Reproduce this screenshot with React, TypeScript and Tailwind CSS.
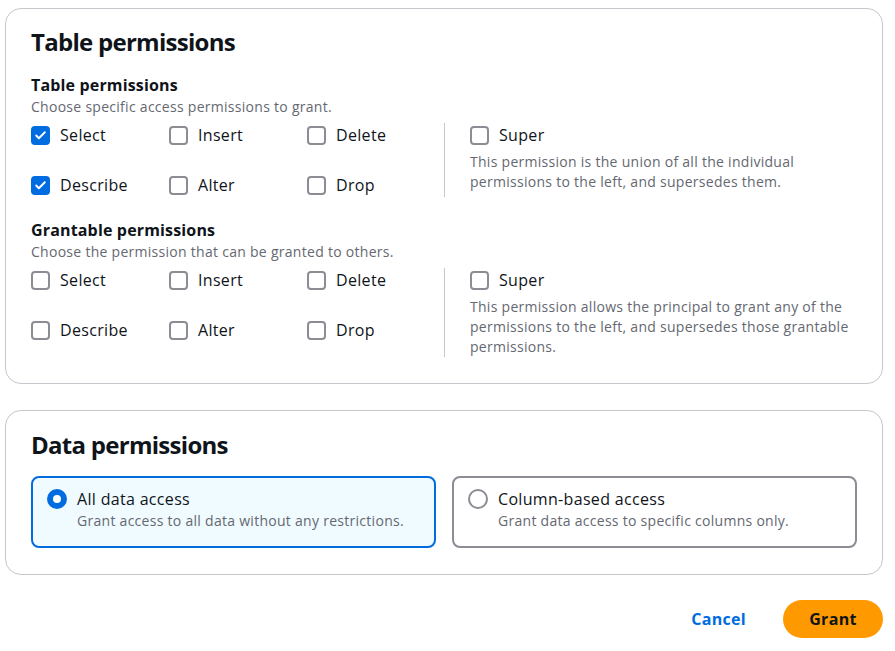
import { Check } from "lucide-react";

type Perm = { label: string; checked?: boolean };

function Checkbox({ checked }: { checked?: boolean }) {
  return checked ? (
    <span className="flex h-[19px] w-[19px] shrink-0 items-center justify-center rounded-[4px] bg-[#006ce0]">
      <Check className="h-[13px] w-[13px] text-white" strokeWidth={3.5} />
    </span>
  ) : (
    <span className="h-[19px] w-[19px] shrink-0 rounded-[4px] border-2 border-[#8c8c94] bg-white" />
  );
}

function CheckItem({ label, checked }: Perm) {
  return (
    <label className="flex h-[24px] items-center gap-[10px] text-[16px] tracking-[0.02em] text-[#0f141a]">
      <Checkbox checked={checked} />
      <span>{label}</span>
    </label>
  );
}

function PermissionGroup({
  title,
  description,
  perms,
  superText,
}: {
  title: string;
  description: string;
  perms: Perm[];
  superText: string;
}) {
  return (
    <div>
      <h3 className="text-[16px] font-bold leading-[23px] tracking-[0.01em] text-[#0f141a]">{title}</h3>
      <p className="text-[14px] leading-[20px] tracking-[0.02em] text-[#656871]">{description}</p>
      <div className="mt-[6px] flex">
        <div className="grid w-[413px] shrink-0 grid-cols-[138px_138px_137px] gap-y-[26px] self-start">
          {perms.map((p) => (
            <CheckItem key={p.label} {...p} />
          ))}
        </div>
        <div className="w-px shrink-0 bg-[#c6c6cd]" />
        <div className="flex-1 pl-[25px]">
          <CheckItem label="Super" />
          <p className="mt-[5px] max-w-[390px] text-[14px] leading-[20px] tracking-[0.02em] text-[#656871]">
            {superText}
          </p>
        </div>
      </div>
    </div>
  );
}

function Tile({
  label,
  description,
  selected,
}: {
  label: string;
  description: string;
  selected?: boolean;
}) {
  return (
    <div
      className={
        selected
          ? "flex h-[72px] flex-1 gap-[10px] rounded-[8px] border-2 border-[#006ce0] bg-[#f0fbff] pt-[9px] pl-[14px]"
          : "flex h-[72px] flex-1 gap-[10px] rounded-[8px] border-2 border-[#8c8c94] bg-white pt-[9px] pl-[14px]"
      }
    >
      <div className="pt-[2px]">
        {selected ? (
          <span className="block h-[20px] w-[20px] rounded-full border-[6px] border-[#006ce0] bg-white" />
        ) : (
          <span className="block h-[20px] w-[20px] rounded-full border-2 border-[#8c8c94] bg-white" />
        )}
      </div>
      <div>
        <div className="text-[16px] leading-[24px] tracking-[0.02em] text-[#0f141a]">{label}</div>
        <div className="text-[14px] leading-[20px] tracking-[0.02em] text-[#656871]">{description}</div>
      </div>
    </div>
  );
}

export default function App() {
  return (
    <div
      className="min-h-screen bg-white pt-[8px] pr-[12px] pl-[5px]"
      style={{ fontFamily: '"Open Sans", "Noto Sans", sans-serif' }}
    >
      {/* Table permissions */}
      <section className="rounded-[16px] border border-[#c6c6cd] px-[25px] pt-[18px] pb-[26px]">
        <h2 className="text-[24px] font-bold leading-[30px] tracking-[-0.03em] text-[#0f141a]">
          Table permissions
        </h2>
        <div className="mt-[17px] flex flex-col gap-[22px]">
          <PermissionGroup
            title="Table permissions"
            description="Choose specific access permissions to grant."
            perms={[
              { label: "Select", checked: true },
              { label: "Insert" },
              { label: "Delete" },
              { label: "Describe", checked: true },
              { label: "Alter" },
              { label: "Drop" },
            ]}
            superText="This permission is the union of all the individual permissions to the left, and supersedes them."
          />
          <PermissionGroup
            title="Grantable permissions"
            description="Choose the permission that can be granted to others."
            perms={[
              { label: "Select" },
              { label: "Insert" },
              { label: "Delete" },
              { label: "Describe" },
              { label: "Alter" },
              { label: "Drop" },
            ]}
            superText="This permission allows the principal to grant any of the permissions to the left, and supersedes those grantable permissions."
          />
        </div>
      </section>

      {/* Data permissions */}
      <section className="mt-[26px] rounded-[16px] border border-[#c6c6cd] px-[25px] pt-[19px] pb-[26px]">
        <h2 className="text-[24px] font-bold leading-[30px] tracking-[-0.03em] text-[#0f141a]">
          Data permissions
        </h2>
        <div className="mt-[16px] flex gap-[16px]">
          <Tile
            selected
            label="All data access"
            description="Grant access to all data without any restrictions."
          />
          <Tile label="Column-based access" description="Grant data access to specific columns only." />
        </div>
      </section>

      <div className="mt-[25px] flex items-center justify-end gap-[37px]">
        <button className="text-[16px] font-bold tracking-[0.02em] text-[#006ce0]">Cancel</button>
        <button className="h-[38px] w-[100px] rounded-full bg-[#ff9900] text-[16px] font-bold tracking-[0.02em] text-[#0f141a]">
          Grant
        </button>
      </div>
    </div>
  );
}
